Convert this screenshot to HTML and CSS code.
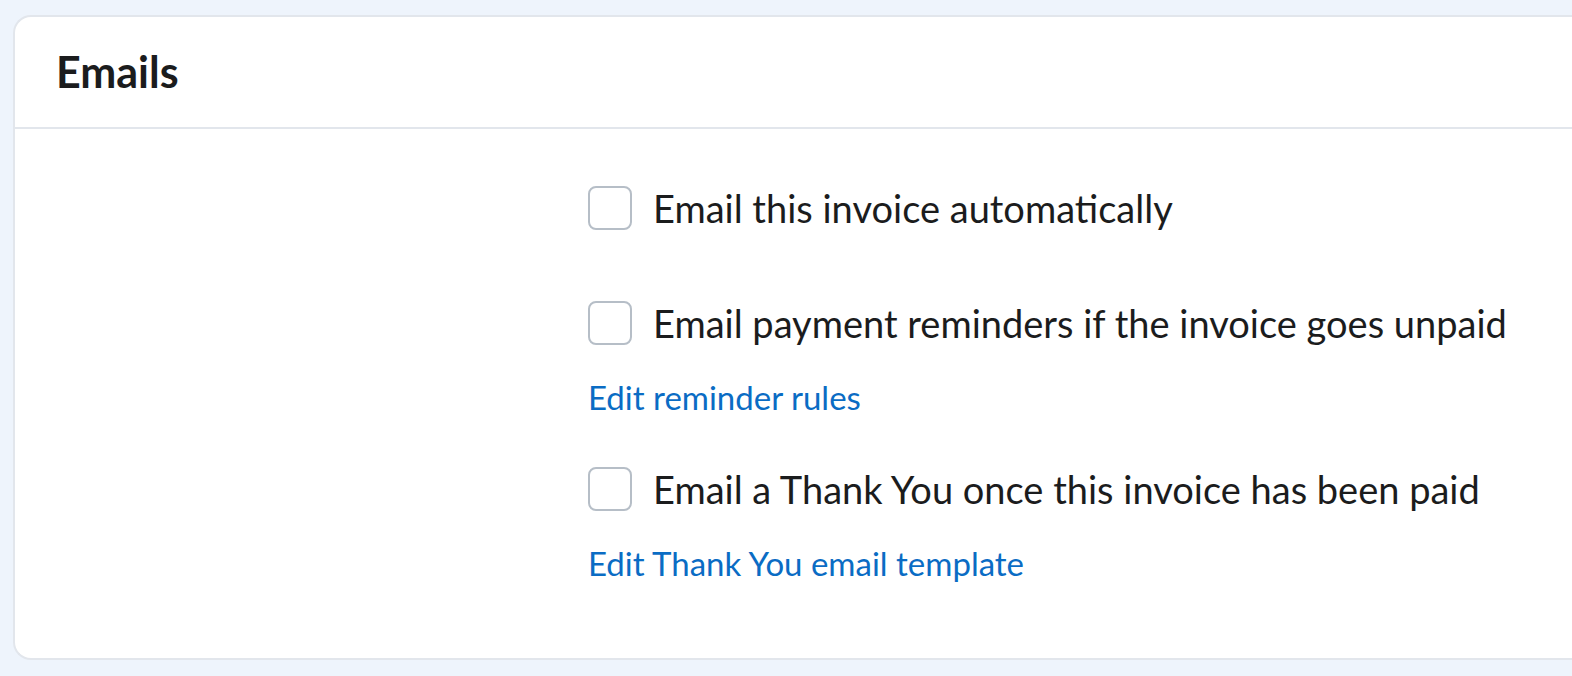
FILE: index.html
```html
<!DOCTYPE html>
<html>
<head>
<meta charset="utf-8">
<link rel="stylesheet" href="styles.css">
</head>
<body>
<div class="page">
  <section class="card">
    <header class="card-header">
      <h2 class="title">Emails</h2>
    </header>
    <div class="card-body">
      <div class="options">
        <div class="group group-single">
          <label class="option">
            <span class="box"></span>
            <span class="label">Email this invoice automatically</span>
          </label>
        </div>
        <div class="group">
          <label class="option">
            <span class="box"></span>
            <span class="label">Email payment reminders if the invoice goes unpaid</span>
          </label>
          <a class="link" href="#">Edit reminder rules</a>
        </div>
        <div class="group">
          <label class="option">
            <span class="box"></span>
            <span class="label">Email a Thank You once this invoice has been paid</span>
          </label>
          <a class="link" href="#">Edit Thank You email template</a>
        </div>
      </div>
    </div>
  </section>
</div>
</body>
</html>
```

FILE: styles.css
```css
html, body {
  margin: 0;
  padding: 0;
}
body {
  background: #eef4fc;
  font-family: Lato, "Liberation Sans", sans-serif;
  color: #1b1c1d;
  width: 1572px;
  height: 676px;
  overflow: hidden;
}
.page {
  padding: 15px 0 0 13px;
}
.card {
  background: #ffffff;
  border: 2px solid #e2e6ec;
  border-right: none;
  border-radius: 18px 0 0 18px;
  width: 1600px;
  height: 645px;
  box-sizing: border-box;
}
.card-header {
  height: 112px;
  border-bottom: 2px solid #e2e6ec;
  box-sizing: border-box;
  display: flex;
  align-items: center;
  padding-left: 41px;
}
.title {
  margin: 0;
  font-size: 43px;
  line-height: 50px;
  font-weight: 700;
}
.card-body {
  padding: 57px 0 0 573px;
}
.options {
  display: flex;
  flex-direction: column;
  gap: 50px;
}
.group {
  display: flex;
  flex-direction: column;
  gap: 32px;
}
.group-single {
  padding-bottom: 21px;
}
.option {
  display: flex;
  align-items: center;
  gap: 21px;
  height: 44px;
}
.box {
  width: 44px;
  height: 44px;
  box-sizing: border-box;
  border: 2px solid #b6bec7;
  border-radius: 8px;
  background: #fff;
  flex: none;
}
.label {
  font-size: 38px;
  line-height: 44px;
}
.link {
  color: #0a6cc4;
  text-decoration: none;
  font-size: 33px;
  line-height: 40px;
}
```
